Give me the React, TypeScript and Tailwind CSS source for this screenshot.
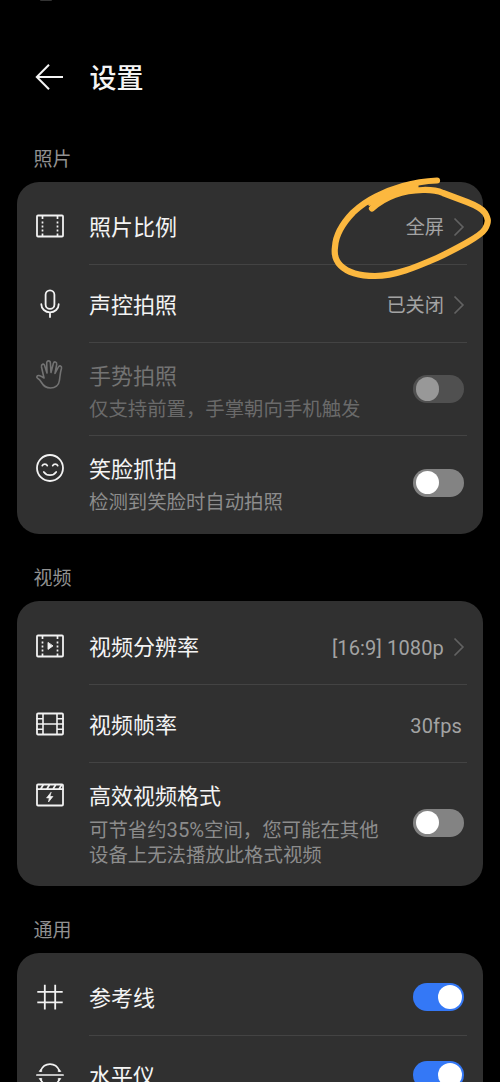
import React from "react";

type IconProps = { children: React.ReactNode; className?: string };

function Icon({ children, className = "text-[#f2f2f2]" }: IconProps) {
  return (
    <svg
      viewBox="0 0 30 30"
      className={`block h-[30px] w-[30px] shrink-0 ${className}`}
      fill="none"
      stroke="currentColor"
      strokeWidth="1.8"
      strokeLinecap="round"
      strokeLinejoin="round"
    >
      {children}
    </svg>
  );
}

const FilmOutline = () => (
  <>
    <rect x="2" y="4.5" width="26" height="21" rx="1" />
    <path
      d="M7.5 5v3M7.5 10.600v2M7.5 14.600v2M7.5 18.600v2M7.5 22.500v3M22.500 5v3M22.500 10.600v2M22.500 14.600v2M22.500 18.600v2M22.500 22.500v3"
      strokeLinecap="butt"
      strokeWidth="1.7"
    />
  </>
);

const RatioIcon = () => (
  <Icon>
    <FilmOutline />
  </Icon>
);

const MicIcon = () => (
  <Icon>
    <rect x="10.600" y="1.400" width="8.800" height="18.400" rx="4.400" />
    <path d="M6.300 15.200a8.700 8.200 0 0 0 17.400 0M15 23.600v4.400" />
  </Icon>
);

const HandIcon = () => (
  <Icon className="text-[#737373]">
    <path
      strokeWidth="1.6"
      d="M9 18 6.500 7C6 4 8.800 3 9.600 5.500L12 13 11.700 3C11.600.200 15.200.200 15.400 3L16 12.500 18.300 3.600C19 1 22 1.600 21.700 4.300L20 13.500 23.400 7C24.500 5 27 6 26.500 8.200 25 13 25 17 24.500 20 24 25.500 20 28 15.500 28 11 28 8.500 26 6.500 22.500 5.200 20.200 4 19 2.600 18.300 1 17.300 2 15.200 4 15.500 6.300 15.900 7.300 17.400 9 18Z"
    />
  </Icon>
);

const SmileIcon = () => (
  <Icon>
    <circle cx="15" cy="15" r="13" />
    <path strokeWidth="1.7" d="M7.300 12.700c1-2.100 4.100-2.100 5 0M17.700 12.700c1-2.100 4.100-2.100 5 0M8.800 18.900c2.900 4.300 9.500 4.300 12.400 0" />
  </Icon>
);

const PlayFilmIcon = () => (
  <Icon>
    <FilmOutline />
    <path d="M13 11.800v6.600l4.700-3.300Z" fill="currentColor" strokeWidth="0.900" />
  </Icon>
);

const FrameRateIcon = () => (
  <Icon>
    <rect x="2" y="4.500" width="26" height="21" rx="1" />
    <path strokeWidth="1.6" d="M8 5v20M22 5v20M8 15h14M2 9.800h6M2 15h6M2 20.200h6M22 9.800h6M22 15h6M22 20.200h6" />
  </Icon>
);

const ClapIcon = () => (
  <Icon>
    <rect x="2" y="4.500" width="26" height="21" rx="1" />
    <path strokeWidth="1.700" d="M2 9.200h26M8 5.200l-2.500 4M14.200 5.200l-2.500 4M20.400 5.200l-2.500 4M26.400 5.200l-2.500 4" />
    <path d="m15.900 12.500-4.300 5.400h2.700l-.8 4.100 4.400-5.500h-2.800Z" fill="currentColor" strokeWidth="0.700" />
  </Icon>
);

const GridIcon = () => (
  <Icon>
    <path strokeLinecap="butt" d="M9.800 2.800v24.800M20.200 2.800v24.800M2.300 9.900h25.400M2.300 20.300h25.400" />
  </Icon>
);

const LevelIcon = () => (
  <Icon>
    <path d="M1.900 15h26.200M5.400 11.100c4-9.200 15.200-9.200 19.200 0M5.400 18.900c4 9.200 15.200 9.200 19.200 0" strokeWidth="1.700" />
    <path d="m4.400 11.400 2.500.2-.5-2.300ZM25.600 11.400l-2.500.2.5-2.300ZM4.400 18.600l2.500-.2-.5 2.300ZM25.600 18.600l-2.500-.2.5 2.300Z" fill="currentColor" strokeWidth="0.600" />
  </Icon>
);

function Chevron() {
  return (
    <svg viewBox="0 0 12 20" className="ml-[9px] mr-[2px] mt-[2px] block h-5 w-3 shrink-0" fill="none" stroke="#626262" strokeWidth="1.700">
      <path d="m1.500 1.500 8.400 8.500-8.400 8.500" />
    </svg>
  );
}

function Toggle({ state }: { state: "on" | "off" | "disabled" }) {
  const track =
    state === "on"
      ? "justify-end bg-[#3478f6]"
      : state === "off"
        ? "justify-start bg-[#838383]"
        : "justify-start bg-[#505050]";
  return (
    <div className={`flex h-7 w-[51px] shrink-0 items-center rounded-full px-[2.500px] ${track}`}>
      <div className={`h-[23.500px] w-[23.500px] rounded-full ${state === "disabled" ? "bg-[#989898]" : "bg-white"}`} />
    </div>
  );
}

type RowProps = {
  icon: React.ReactNode;
  title: string;
  children: React.ReactNode;
};

function Row({ icon, title, children }: RowProps) {
  return (
    <div className="flex h-[78px] pl-[18px]">
      <div className="flex items-center">{icon}</div>
      <div className="ml-6 mr-4 flex flex-1 items-center border-b border-[#434343]">
        <div className="flex-1 pt-[4px] text-[22px] leading-[30px] text-[#f4f4f4]">{title}</div>
        {children}
      </div>
    </div>
  );
}

type DetailRowProps = {
  icon: React.ReactNode;
  title: string;
  lines: React.ReactNode[];
  state: "on" | "off" | "disabled";
  last?: boolean;
};

function DetailRow({ icon, title, lines, state, last = false }: DetailRowProps) {
  const dim = state === "disabled";
  return (
    <div className={`flex pl-[18px] ${lines.length > 1 ? "h-[119px]" : "h-[93px]"}`}>
      <div className="pt-[17px]">{icon}</div>
      <div className={`ml-6 mr-4 flex flex-1 items-center ${last ? "" : "border-b border-[#434343]"}`}>
        <div className="flex-1 self-start pt-[19px]">
          <div className={`text-[22px] leading-[30px] ${dim ? "text-[#737373]" : "text-[#f4f4f4]"}`}>{title}</div>
          <div className={`mt-[5px] text-[19.400px] leading-[26px] ${dim ? "text-[#6a6a6a]" : "text-[#8c8c8c]"}`}>
            {lines.map((line, i) => (
              <div key={i} className="h-[26px] whitespace-nowrap">
                {line}
              </div>
            ))}
          </div>
        </div>
        <div className="mr-[3px]">
          <Toggle state={state} />
        </div>
      </div>
    </div>
  );
}

function Value({ children, latin = false }: { children: React.ReactNode; latin?: boolean }) {
  return (
    <span className={`pt-[4px] leading-[28px] text-[#a3a3a3] ${latin ? "text-[20px] tracking-[0.150px]" : "text-[19.200px]"}`}>
      {children}
    </span>
  );
}

function SectionTitle({ children }: { children: React.ReactNode }) {
  return <h2 className="pl-[33.500px] text-[19px] leading-7 text-[#919191]">{children}</h2>;
}

function Card({ children, className = "pt-[5px] pb-[5px]" }: { children: React.ReactNode; className?: string }) {
  return <section className={`mx-[17px] rounded-[22px] bg-[#303030] ${className}`}>{children}</section>;
}

export default function App() {
  return (
    <main className="relative h-[1082px] w-[500px] overflow-hidden bg-black font-[Roboto,'Noto_Sans_CJK_SC',sans-serif]">
      <div className="ml-10 h-[1px] w-3 rounded-b-full bg-[#333333]" />
      <header className="flex h-[145px] items-center pl-[35px] pt-[7px]">
        <svg viewBox="0 0 30 30" className="h-[30px] w-[30px]" fill="none" stroke="#f4f4f4" strokeWidth="2">
          <path d="M28 15H2M14 2.800 1.800 15 14 27.200" />
        </svg>
        <h1 className="ml-[24.500px] pt-[3px] text-[27px] font-medium leading-9 text-[#f4f4f4]">设置</h1>
      </header>

      <div className="pb-[8px]">
        <SectionTitle>照片</SectionTitle>
      </div>
      <Card>
        <Row icon={<RatioIcon />} title="照片比例">
          <Value>全屏</Value>
          <Chevron />
        </Row>
        <Row icon={<MicIcon />} title="声控拍照">
          <Value>已关闭</Value>
          <Chevron />
        </Row>
        <DetailRow icon={<HandIcon />} title="手势拍照" lines={["仅支持前置，手掌朝向手机触发"]} state="disabled" />
        <DetailRow icon={<SmileIcon />} title="笑脸抓拍" lines={["检测到笑脸时自动拍照"]} state="off" last />
      </Card>

      <div className="pb-[8px] pt-[31px]">
        <SectionTitle>视频</SectionTitle>
      </div>
      <Card className="pt-[6px] pb-[4px]">
        <Row icon={<PlayFilmIcon />} title="视频分辨率">
          <Value latin>[16:9] 1080p</Value>
          <Chevron />
        </Row>
        <Row icon={<FrameRateIcon />} title="视频帧率">
          <div className="flex pr-[5px]">
            <Value latin>30fps</Value>
          </div>
        </Row>
        <DetailRow
          icon={<ClapIcon />}
          title="高效视频格式"
          lines={[
            <>
              可节省约<span className="text-[20.200px]">35%</span>空间，您可能在其他
            </>,
            "设备上无法播放此格式视频",
          ]}
          state="off"
          last
        />
      </Card>

      <div className="pb-[8px] pt-[31px]">
        <SectionTitle>通用</SectionTitle>
      </div>
      <Card>
        <Row icon={<GridIcon />} title="参考线">
          <div className="mr-[3px] pt-[1px]">
            <Toggle state="on" />
          </div>
        </Row>
        <Row icon={<LevelIcon />} title="水平仪">
          <div className="mr-[3px] pt-[1px]">
            <Toggle state="on" />
          </div>
        </Row>
      </Card>

      <svg
        viewBox="325 170 175 115"
        className="pointer-events-none absolute left-[325px] top-[170px] h-[115px] w-[175px]"
        fill="none"
        stroke="#fcb83f"
        strokeLinecap="round"
        strokeLinejoin="round"
      >
        <path
          strokeWidth="6.200"
          d="M372 208.500C385 197 402 190.500 423 190C430 189.800 437 190.500 443 193L467 202C476 205.500 482 208.500 485 213C488.500 219 489 222 485 229C482 234 474 238.500 467 242.500C457 248 448 253 437 258C415 267.500 395 276 375 276C358 276 348 273 340.500 265.500C335 260 334 254 335 247C335.500 237 341 225 353 212.500C361 205 368 200.500 376 196.500C385 192 394 188.500 403 186C415 182.500 425 181 437 180.500"
        />
        <path d="M366 203C380 192 402 186 418 184V190C402 191 386 197 373 207Z" fill="#fcb83f" strokeWidth="1" />
      </svg>
    </main>
  );
}
